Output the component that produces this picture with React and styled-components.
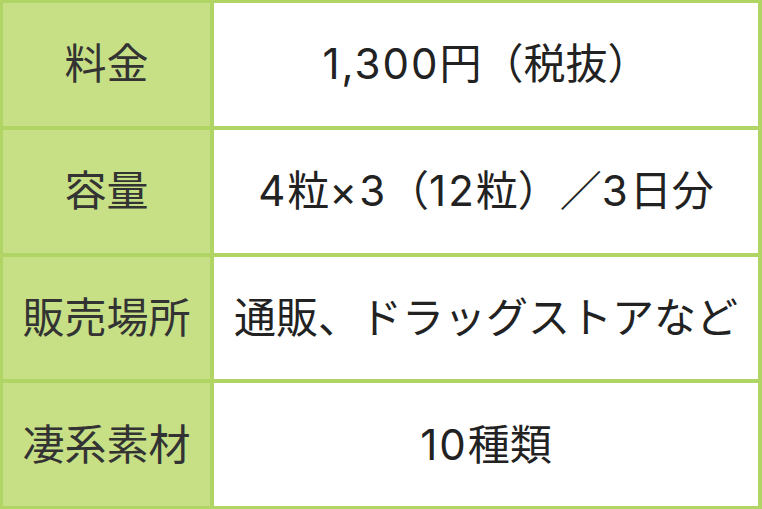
import { Fragment } from "react";
import styled, { createGlobalStyle } from "styled-components";

const GlobalStyle = createGlobalStyle`
  html, body {
    margin: 0;
    padding: 0;
    background: #ffffff;
  }
`;

const Table = styled.div`
  width: 762px;
  height: 509px;
  box-sizing: border-box;
  display: grid;
  grid-template-columns: 207px 1fr;
  grid-template-rows: repeat(4, 1fr);
  gap: 4px;
  padding: 3px 4px 3px 3px;
  background-color: #b1d564;
  font-family: Inter, "Noto Sans CJK JP", sans-serif;
`;

const Cell = styled.div`
  display: flex;
  align-items: center;
  justify-content: center;
  font-size: 42px;
  line-height: 1;
  white-space: nowrap;
  background-color: ${(p) => (p.$head ? "#c7e086" : "#ffffff")};
  color: ${(p) => (p.$head ? "#333333" : "#222222")};
`;

// latin digits are a little wider in the original
const Num = styled.span`
  letter-spacing: 2px;
`;

const rows = [
  {
    label: "料金",
    value: (
      <>
        <Num>1,300</Num>円（税抜）
      </>
    ),
  },
  {
    label: "容量",
    value: (
      <>
        <Num>4</Num>粒<Num>×3</Num>（<Num>12</Num>粒）／<Num>3</Num>日分
      </>
    ),
  },
  { label: "販売場所", value: "通販、ドラッグストアなど" },
  {
    label: "凄系素材",
    value: (
      <>
        <Num>10</Num>種類
      </>
    ),
  },
];

const App = () => {
  return (
    <>
      <GlobalStyle />
      <Table>
        {rows.map((row) => (
          <Fragment key={row.label}>
            <Cell $head>{row.label}</Cell>
            <Cell>
              <span>{row.value}</span>
            </Cell>
          </Fragment>
        ))}
      </Table>
    </>
  );
};

export default App;
